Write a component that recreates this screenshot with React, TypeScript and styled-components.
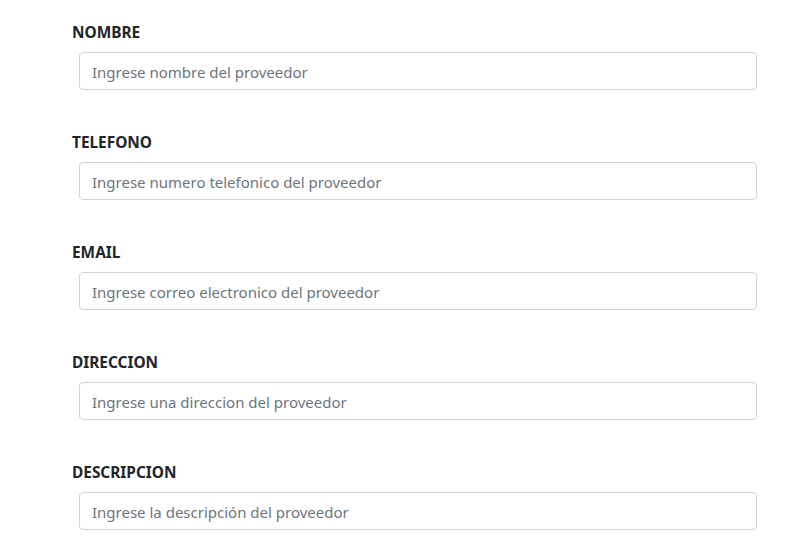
import React from "react";
import styled, { createGlobalStyle } from "styled-components";

const Global = createGlobalStyle`
  html, body { margin: 0; padding: 0; background: #fff; }
  body { font-family: "Noto Sans", "Open Sans", sans-serif; color: #212529; }
`;

const Form = styled.form`
  display: flex;
  flex-direction: column;
  gap: 40px;
  padding: 20px 51px 0 72px;
`;

const Group = styled.div`
  display: flex;
  flex-direction: column;
  gap: 8px;
`;

const Label = styled.label`
  font-weight: 700;
  font-size: 15.4px;
  line-height: 26px;
  height: 24px;
  color: #212529;
`;

const Input = styled.input`
  box-sizing: border-box;
  margin-left: 7px;
  height: 38px;
  padding: 7px 12px 5px;
  font-family: inherit;
  font-size: 15px;
  line-height: 24px;
  color: #495057;
  background: #fff;
  border: 1px solid #ced4da;
  border-radius: 4px;
  outline: none;
  &::placeholder { color: #6c757d; opacity: 1; }
`;

const fields = [
  ["NOMBRE", "Ingrese nombre del proveedor"],
  ["TELEFONO", "Ingrese numero telefonico del proveedor"],
  ["EMAIL", "Ingrese correo electronico del proveedor"],
  ["DIRECCION", "Ingrese una direccion del proveedor"],
  ["DESCRIPCION", "Ingrese la descripción del proveedor"],
];

export default function App() {
  return (
    <>
      <Global />
      <Form>
        {fields.map(([l, p]) => (
          <Group key={l}>
            <Label>{l}</Label>
            <Input placeholder={p} />
          </Group>
        ))}
      </Form>
    </>
  );
}
